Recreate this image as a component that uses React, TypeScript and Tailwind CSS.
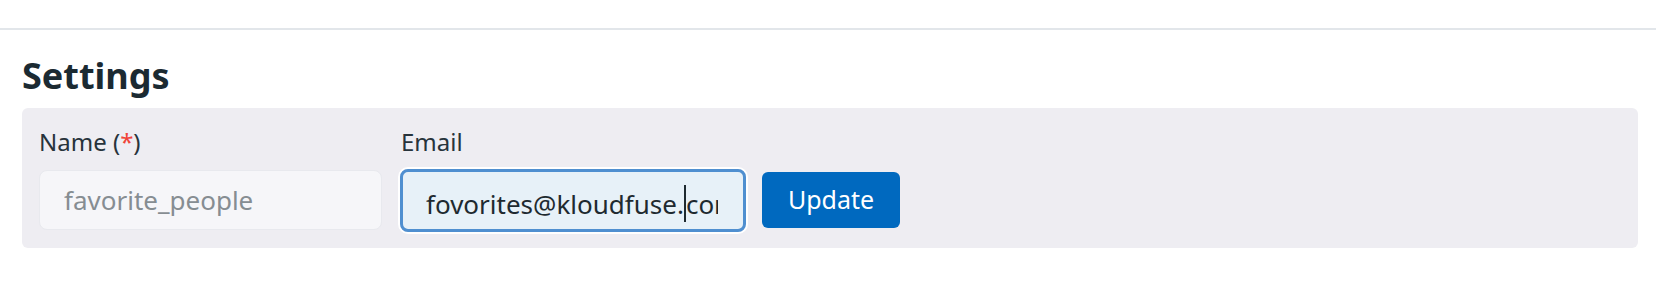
const FONT = "font-['Noto_Sans',_'Open_Sans',_sans-serif]";

function FieldLabel({ children }: { children: React.ReactNode }) {
  return (
    <label className="block h-[40px] text-[24px] leading-[40px] text-[#27333b]">
      {children}
    </label>
  );
}

export default function App() {
  return (
    <div className={`${FONT} h-[284px] w-full bg-white`}>
      <div className="h-[28px]" />
      <div className="h-[2px] w-full bg-[#e2e6ea]" />

      <h2 className="ml-[22px] mt-[22px] text-[36px] font-bold leading-[48px] text-[#1b2a32]">
        Settings
      </h2>

      <div className="ml-[22px] mr-[18px] mt-[8px] h-[140px] rounded-[6px] bg-[#eeedf2] pl-[17px] pt-[14px]">
        <div className="flex items-start">
          <div className="flex w-[343px] flex-col">
            <FieldLabel>
              Name (<span className="text-[#f0443a]">*</span>)
            </FieldLabel>
            <input
              readOnly
              placeholder="favorite_people"
              className="mt-[8px] h-[60px] w-full rounded-[8px] border border-[#e8e9ee] bg-[#f6f6f9] px-[24px] text-[26px] text-[#27333b] outline-none placeholder:text-[#868d92]"
            />
          </div>

          <div className="ml-[16px] flex w-[350px] flex-col">
            <FieldLabel>
              <span className="pl-[3px]">Email</span>
            </FieldLabel>
            <div className="mt-[5px] rounded-[10px] border-2 border-white">
              <div className="flex h-[63px] items-center rounded-[8px] border-[3px] border-[#4f8fd0] bg-[#e7f1f8] pl-[23px] pr-[25px] text-[26px] text-[#1e2a30]">
                <div className="overflow-hidden whitespace-nowrap">
                  fovorites@kloudfuse.
                  <span className="inline-block h-[37px] w-[2px] translate-y-[8px] bg-[#1e2a30]" />
                  com
                </div>
              </div>
            </div>
          </div>

          <button className="ml-[14px] mt-[50px] h-[56px] w-[138px] rounded-[6px] bg-[#0069bf] text-[25px] text-white">
            Update
          </button>
        </div>
      </div>
    </div>
  );
}
